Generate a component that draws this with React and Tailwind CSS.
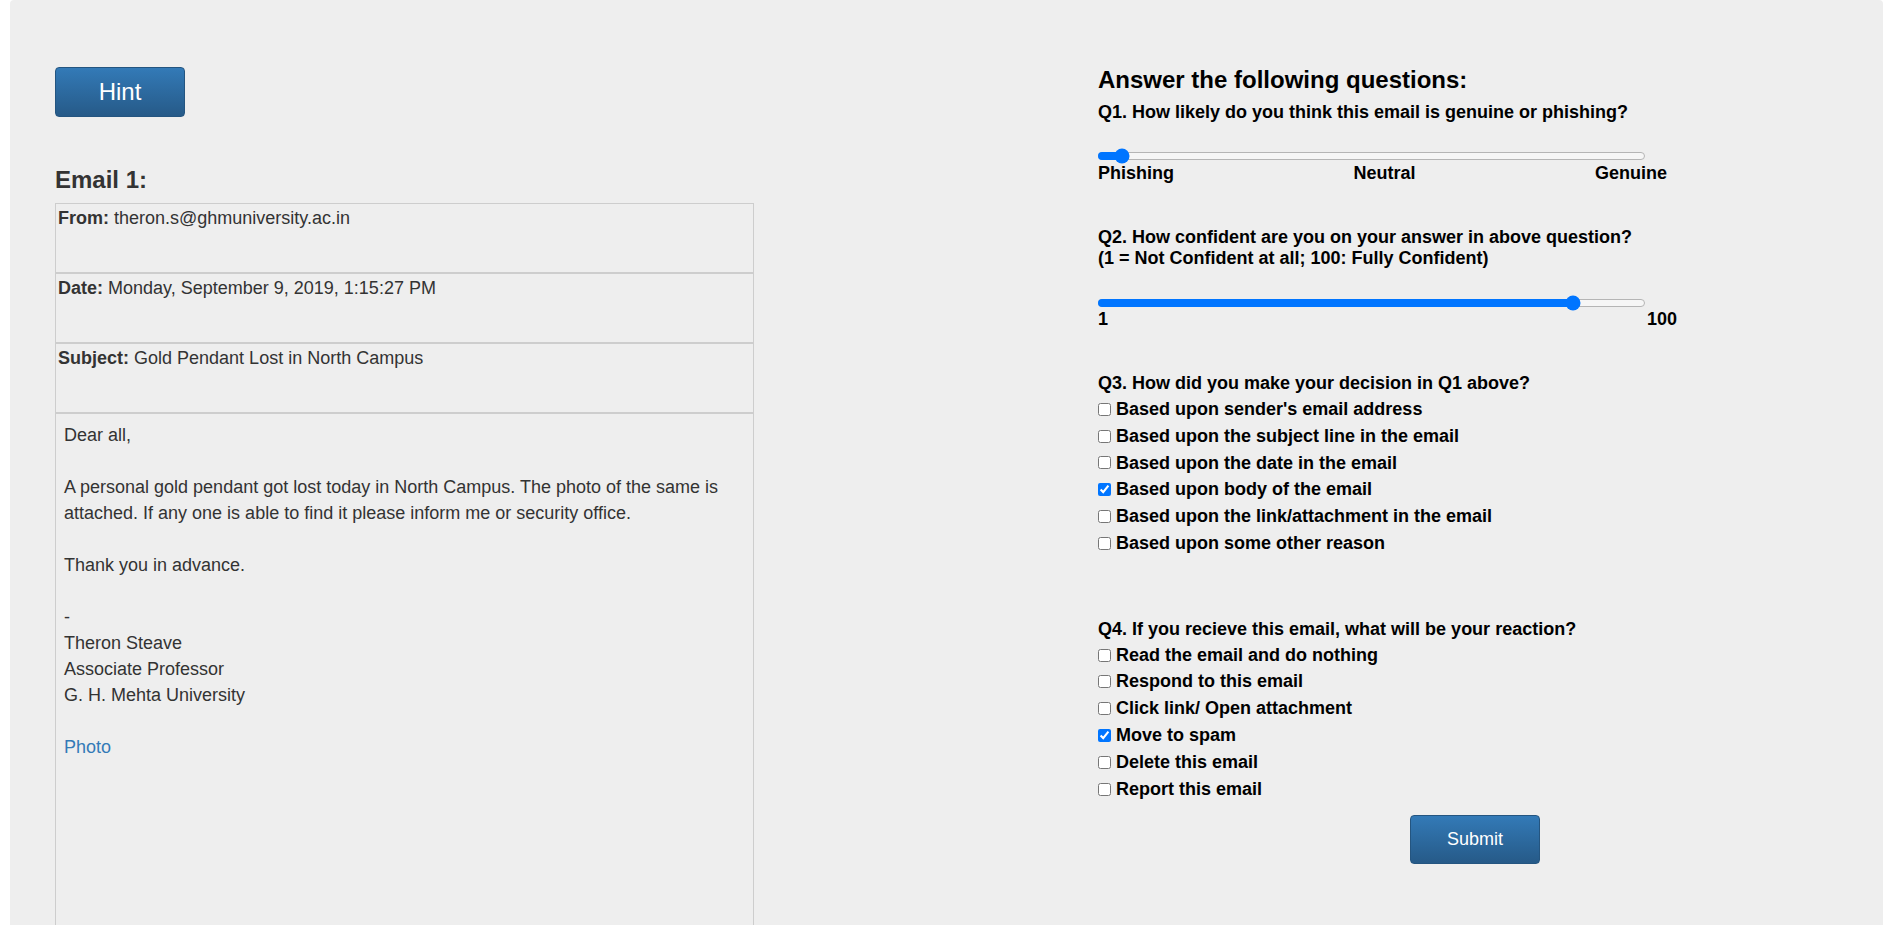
import React from "react";

const reasons = [
  { label: "Based upon sender's email address", checked: false },
  { label: "Based upon the subject line in the email", checked: false },
  { label: "Based upon the date in the email", checked: false },
  { label: "Based upon body of the email", checked: true },
  { label: "Based upon the link/attachment in the email", checked: false },
  { label: "Based upon some other reason", checked: false },
];

const reactions = [
  { label: "Read the email and do nothing", checked: false },
  { label: "Respond to this email", checked: false },
  { label: "Click link/ Open attachment", checked: false },
  { label: "Move to spam", checked: true },
  { label: "Delete this email", checked: false },
  { label: "Report this email", checked: false },
];

const Slider = ({ percent, className }) => {
  return (
    <div
      className={`relative h-[8px] w-[547px] rounded-full border border-[#b5b5b5] bg-[#f6f6f6] ${className}`}
    >
      <div
        className="absolute -left-px -top-px h-[8px] rounded-full bg-[#0075ff]"
        style={{ width: `${percent}%` }}
      />
      {/* thumb */}
      <div
        className="absolute top-1/2 h-[15px] w-[15px] -translate-x-1/2 -translate-y-1/2 rounded-full bg-[#0075ff]"
        style={{ left: `${percent}%` }}
      />
    </div>
  );
};

const CheckRow = ({ label, checked }) => (
  <label className="flex h-[26.8px] items-center gap-[5px]">
    <input
      type="checkbox"
      defaultChecked={checked}
      className="m-0 h-[13px] w-[13px] accent-[#0075ff]"
    />
    <span>{label}</span>
  </label>
);

const HeaderRow = ({ name, value }) => (
  <div className="h-[70px] border border-[#cdcdcd] px-[2px] pt-px leading-[26px]">
    <b>{name}</b> {value}
  </div>
);

export default function App() {
  return (
    <div
      className="min-h-screen bg-white"
      style={{ fontFamily: '"Liberation Sans", Arial, sans-serif' }}
    >
      <div className="ml-[10px] flex min-h-[925px] w-[1873px] items-start rounded-t-[4px] bg-[#eeeeee] pl-[45px]">
        {/* Email - Left */}
        <div className="w-[699px] pt-[67px] text-[18px] text-[#333]">
          <button className="h-[50px] w-[130px] rounded-[4px] border border-[#245580] bg-gradient-to-b from-[#337ab7] to-[#265a88] text-[24px] text-white">
            Hint
          </button>

          <h3 className="mt-[49px] text-[24px] font-bold leading-[28px] text-[#333]">
            Email 1:
          </h3>

          <div className="mt-[9px]">
            <HeaderRow name="From:" value="theron.s@ghmuniversity.ac.in" />
            <HeaderRow
              name="Date:"
              value="Monday, September 9, 2019, 1:15:27 PM"
            />
            <HeaderRow
              name="Subject:"
              value="Gold Pendant Lost in North Campus"
            />
            <div className="min-h-[600px] border border-[#cdcdcd] p-2 leading-[26px]">
              <p>Dear all,</p>
              <br />
              <p>
                A personal gold pendant got lost today in North Campus. The
                photo of the same is attached. If any one is able to find it
                please inform me or security office.
              </p>
              <br />
              <p>Thank you in advance.</p>
              <br />
              <p>-</p>
              <p>Theron Steave</p>
              <p>Associate Professor</p>
              <p>G. H. Mehta University</p>
              <br />
              <a href="#" className="text-[#337ab7]">
                Photo
              </a>
            </div>
          </div>
        </div>

        {/* Questions - Right */}
        <div className="ml-[344px] w-[754px] pt-[66px] text-[18px] font-bold text-black">
          <h2 className="text-[24px] leading-[28px]">
            Answer the following questions:
          </h2>

          <p className="mt-[8px] leading-[21px]">
            Q1. How likely do you think this email is genuine or phishing?
          </p>
          <Slider percent={4.2} className="mt-[29px]" />
          <div className="mt-[3px] flex w-[569px] justify-between leading-[21px]">
            <span>Phishing</span>
            <span>Neutral</span>
            <span>Genuine</span>
          </div>

          <p className="mt-[43px] leading-[21px]">
            Q2. How confident are you on your answer in above question?
            <br />
            (1 = Not Confident at all; 100: Fully Confident)
          </p>
          <Slider percent={87} className="mt-[30px]" />
          <div className="mt-[2px] flex w-[579px] justify-between leading-[21px]">
            <span>1</span>
            <span>100</span>
          </div>

          <p className="mt-[43px] leading-[21px]">
            Q3. How did you make your decision in Q1 above?
          </p>
          <div className="mt-[2px]">
            {reasons.map((r) => (
              <CheckRow key={r.label} label={r.label} checked={r.checked} />
            ))}
          </div>

          <p className="mt-[62px] leading-[21px]">
            Q4. If you recieve this email, what will be your reaction?
          </p>
          <div className="mt-[2px]">
            {reactions.map((r) => (
              <CheckRow key={r.label} label={r.label} checked={r.checked} />
            ))}
          </div>

          <div className="mt-[12px] flex justify-center">
            <button className="h-[49px] w-[130px] rounded-[4px] border border-[#245580] bg-gradient-to-b from-[#337ab7] to-[#265a88] text-[18px] font-normal text-white">
              Submit
            </button>
          </div>
        </div>
      </div>
    </div>
  );
}
